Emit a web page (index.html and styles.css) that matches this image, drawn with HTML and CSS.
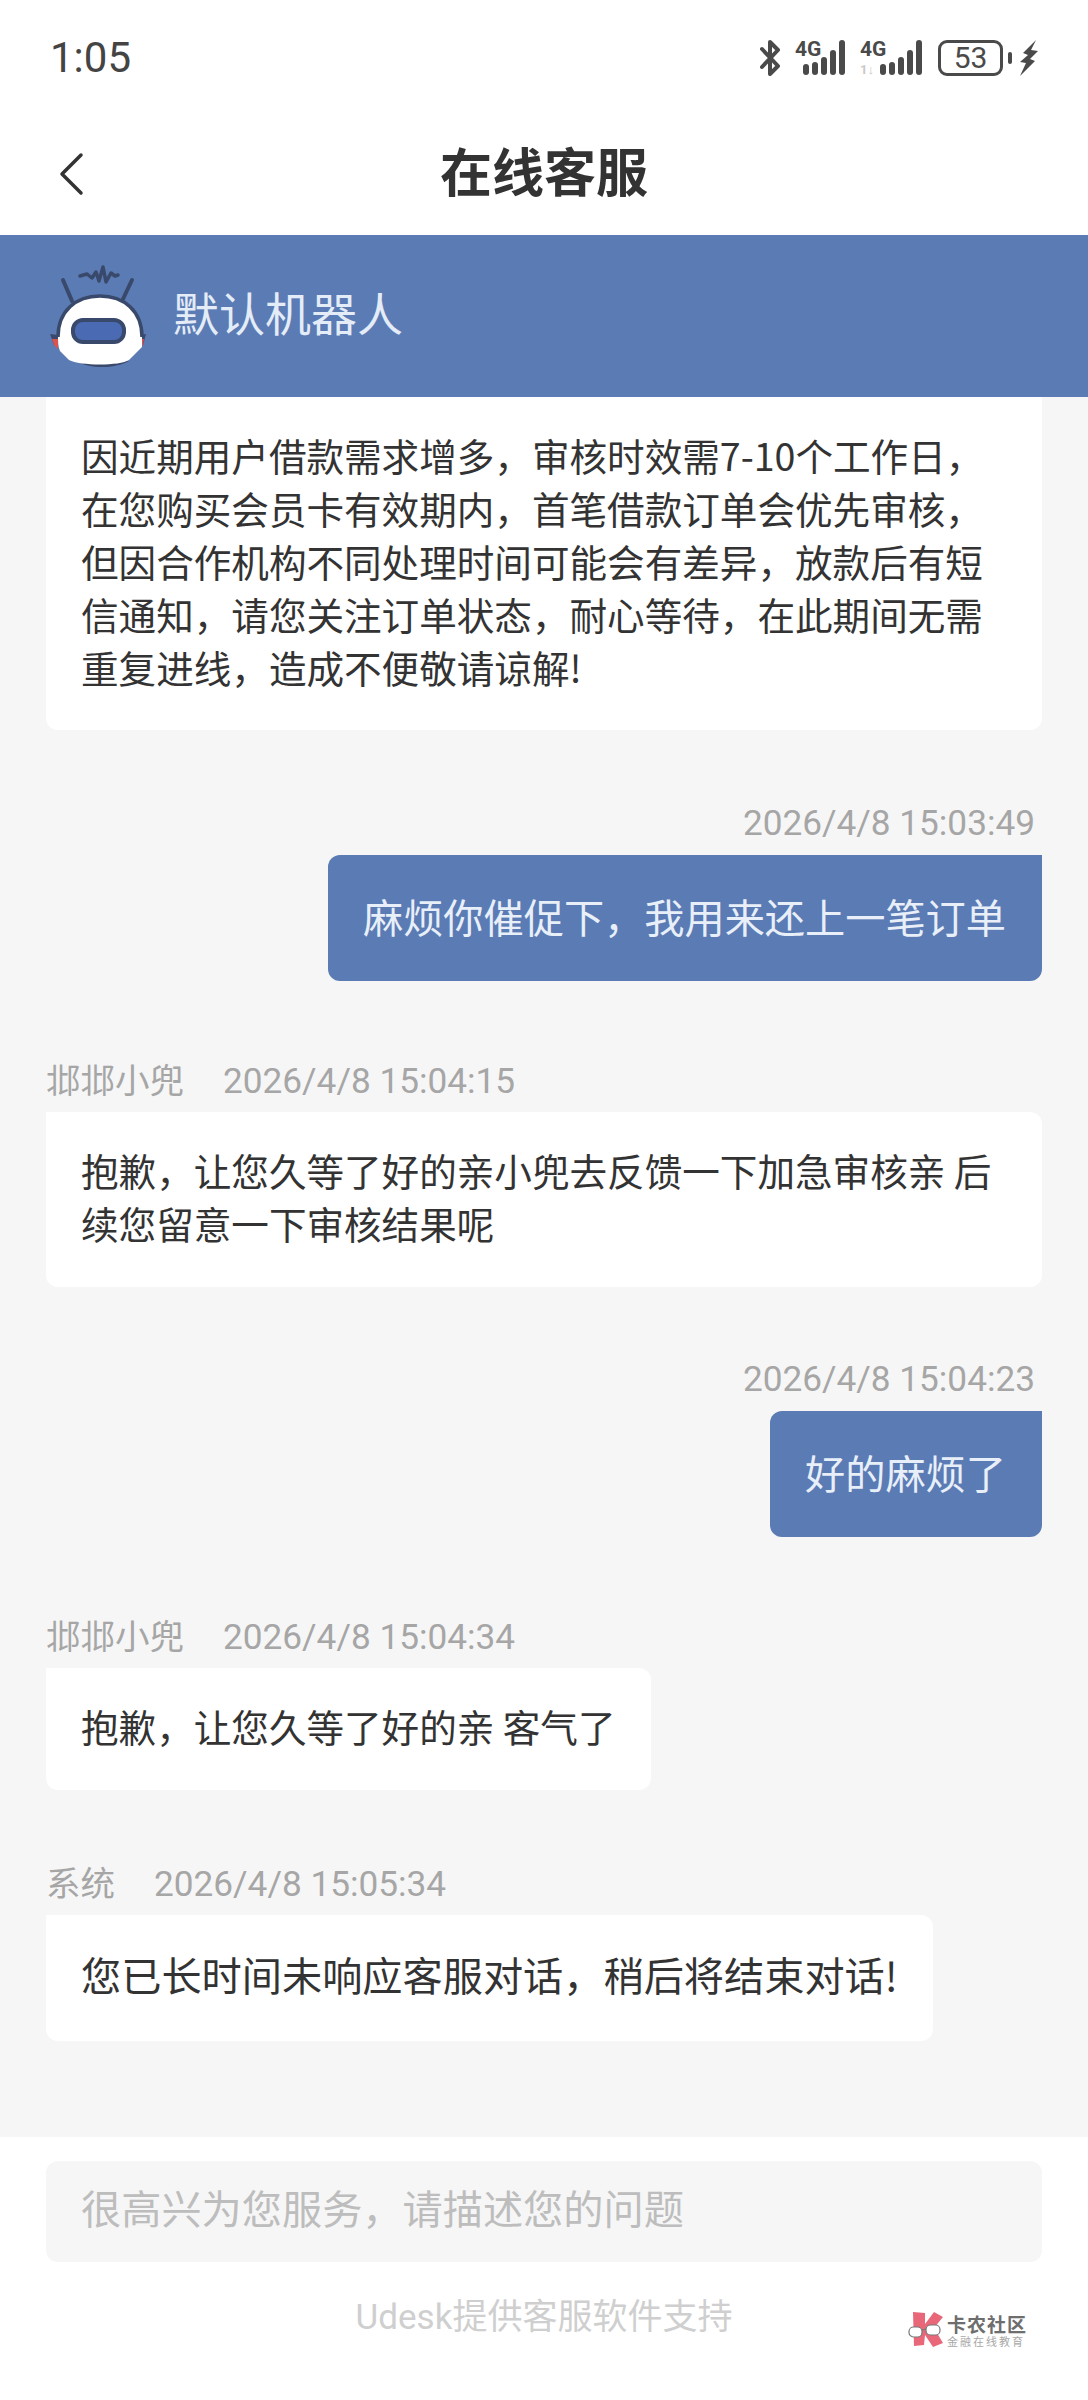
FILE: index.html
```html
<!DOCTYPE html>
<html lang="zh-CN">
<head>
    <meta charset="UTF-8">
    <meta name="viewport" content="width=device-width, initial-scale=1.0">
    <title>在线客服</title>
    <link rel="stylesheet" href="styles.css">
</head>
<body>
    <div class="page">
        <!-- status bar -->
        <div class="status-bar">
            <span class="clock">1:05</span>
            <div class="status-icons">
                <svg class="icon-bt" width="20" height="36" viewBox="0 0 20 36" fill="none" stroke="#4a4a4a" stroke-width="4" stroke-linejoin="round" stroke-linecap="round">
                    <path d="M2 9 18 26 10 34V2L18 10 2 27"/>
                </svg>
                <div class="signal">
                    <span class="net">4G</span>
                    <svg width="42" height="36" viewBox="0 0 42 36" fill="#4a4a4a">
                        <rect x="0" y="24" width="6" height="11" rx="3"/>
                        <rect x="9" y="22" width="6" height="13" rx="3"/>
                        <rect x="18" y="17" width="6" height="18" rx="3"/>
                        <rect x="27" y="10" width="6" height="25" rx="3"/>
                        <rect x="36" y="0" width="6" height="35" rx="3"/>
                    </svg>
                </div>
                <div class="signal signal-second">
                    <span class="net">4G</span>
                    <span class="sim">1↓</span>
                    <svg width="42" height="36" viewBox="0 0 42 36" fill="#4a4a4a">
                        <rect x="0" y="24" width="6" height="11" rx="3"/>
                        <rect x="9" y="22" width="6" height="13" rx="3"/>
                        <rect x="18" y="17" width="6" height="18" rx="3"/>
                        <rect x="27" y="10" width="6" height="25" rx="3"/>
                        <rect x="36" y="0" width="6" height="35" rx="3"/>
                    </svg>
                </div>
                <div class="battery">53</div>
                <span class="battery-cap"></span>
                <svg class="icon-bolt" width="18" height="36" viewBox="0 0 18 36" fill="#4a4a4a">
                    <path d="M16 0 3 13 8 15 0 22 6 23 0 36 15 21 10 19 18 11 11 10Z"/>
                </svg>
            </div>
        </div>

        <!-- title -->
        <div class="nav">
            <svg class="nav-back" width="26" height="44" viewBox="0 0 26 44" fill="none" stroke="#333" stroke-width="3.5" stroke-linecap="round" stroke-linejoin="round">
                <path d="M23 3 4 22 23 41"/>
            </svg>
            <h1 class="nav-title">在线客服</h1>
        </div>

        <!-- robot header -->
        <div class="agent-bar">
            <svg class="robot" width="130" height="150" viewBox="0 0 130 150">
                <path d="M42 60 33 39M93 58 102 39" stroke="#39496b" stroke-width="4" stroke-linecap="round"/>
                <path d="M50 35 57 33 62 37 66 31 69 40 73 26 76 41 81 32 85 35 88 34" fill="none" stroke="#39496b" stroke-width="3.5" stroke-linecap="round" stroke-linejoin="round"/>
                <path d="M20 93 28 94 28 106 24 104Z" fill="#3b4a6b"/>
                <path d="M116 93 110 94 110 106 113 104Z" fill="#3b4a6b"/>
                <path d="M22 98 28 98 28 108 24 104Z" fill="#d9534f"/>
                <path d="M114 98 110 98 110 108 113 104Z" fill="#d9534f"/>
                <path d="M46 120C60 128 84 128 99 120L92 118H53Z" fill="#39496b"/>
                <path d="M28 93C28 70 46 55 70 55 94 55 112 70 112 93V106L99 119C90 125 50 125 39 119L30 110C28 106 28 100 28 93Z" fill="#fff"/>
                <path d="M28 96C28 70 46 55 70 55 94 55 112 70 112 96" fill="none" stroke="#39496b" stroke-width="3.5"/>
                <rect x="43" y="79" width="51" height="22" rx="10" fill="#4a6bb3" stroke="#39496b" stroke-width="4"/>
            </svg>
            <span class="agent-name">默认机器人</span>
        </div>

        <!-- messages -->
        <div class="chat">
            <div class="bubble bubble-agent bubble-first">因近期用户借款需求增多，审核时效需7-10个工作日，<br>在您购买会员卡有效期内，首笔借款订单会优先审核，<br>但因合作机构不同处理时间可能会有差异，放款后有短<br>信通知，请您关注订单状态，耐心等待，在此期间无需<br>重复进线，造成不便敬请谅解!</div>

            <div class="msg msg-me msg-a">
                <div class="meta">2026/4/8 15:03:49</div>
                <div class="bubble bubble-me">麻烦你催促下，我用来还上一笔订单</div>
            </div>

            <div class="msg msg-b">
                <div class="meta"><span class="sender">邶邶小兜</span>2026/4/8 15:04:15</div>
                <div class="bubble bubble-agent">抱歉，让您久等了好的亲小兜去反馈一下加急审核亲 后续您留意一下审核结果呢</div>
            </div>

            <div class="msg msg-me msg-c">
                <div class="meta">2026/4/8 15:04:23</div>
                <div class="bubble bubble-me">好的麻烦了</div>
            </div>

            <div class="msg msg-d">
                <div class="meta"><span class="sender">邶邶小兜</span>2026/4/8 15:04:34</div>
                <div class="bubble bubble-agent">抱歉，让您久等了好的亲 客气了</div>
            </div>

            <div class="msg msg-e">
                <div class="meta"><span class="sender">系统</span>2026/4/8 15:05:34</div>
                <div class="bubble bubble-system">您已长时间未响应客服对话，稍后将结束对话!</div>
            </div>
        </div>

        <!-- input -->
        <div class="composer">
            <div class="composer-input">很高兴为您服务，请描述您的问题</div>
            <div class="powered">Udesk提供客服软件支持</div>
        </div>

        <!-- watermark -->
        <div class="watermark">
            <svg width="36" height="36" viewBox="0 0 36 36">
                <path d="M5 0 17 1V12L26 0 35 5 26 16 35 31 25 35 17 23 16 33 6 34Z" fill="#e8687a"/>
                <rect x="1" y="15" width="13" height="10" rx="4.5" fill="#fff" stroke="#777" stroke-width="1.2"/>
                <rect x="18" y="13" width="14" height="10" rx="4.5" fill="#fff" stroke="#777" stroke-width="1.2"/>
                <path d="M14 18 18 17" stroke="#777" stroke-width="1.2"/>
            </svg>
            <div class="watermark-text">
                <span class="watermark-name">卡农社区</span>
                <span class="watermark-sub">金融在线教育</span>
            </div>
        </div>
    </div>
</body>
</html>
```

FILE: styles.css
```css
* {
    box-sizing: border-box;
}
body {
    margin: 0;
    background-color: #fff;
    font-family: "Noto Sans CJK SC", "Noto Sans", sans-serif;
    color: #333;
}
.page {
    position: relative;
    width: 1088px;
    height: 2400px;
    overflow: hidden;
    display: flex;
    flex-direction: column;
}

/* status bar */
.status-bar {
    height: 115px;
    padding: 0 50px;
    display: flex;
    justify-content: space-between;
    align-items: center;
}
.clock {
    font-family: Roboto, sans-serif;
    font-size: 42px;
    color: #444;
}
.status-icons {
    display: flex;
    align-items: center;
}
.icon-bt {
    margin-right: 15px;
}
.signal {
    position: relative;
    width: 50px;
    height: 36px;
    display: flex;
    justify-content: flex-end;
    margin-right: 15px;
}
.signal svg {
    flex-shrink: 0;
}
.net {
    position: absolute;
    left: 0;
    top: -1px;
    font-family: Roboto, sans-serif;
    font-size: 21px;
    font-weight: 700;
    line-height: 21px;
    color: #4a4a4a;
}
.signal-second {
    width: 62px;
    margin-right: 16px;
}
.sim {
    position: absolute;
    left: 0;
    bottom: 0;
    font-family: Roboto, sans-serif;
    font-size: 13px;
    line-height: 13px;
    font-weight: 700;
    color: #c9c9c9;
}
.battery {
    width: 65px;
    height: 36px;
    border: 3px solid #4a4a4a;
    border-radius: 9px;
    font-family: Roboto, sans-serif;
    font-size: 30px;
    line-height: 30px;
    text-align: center;
    color: #4a4a4a;
}
.battery-cap {
    width: 4px;
    height: 12px;
    margin: 0 8px 0 5px;
    border-radius: 2px;
    background-color: #4a4a4a;
}

/* title */
.nav {
    height: 120px;
    padding-bottom: 12px;
    display: flex;
    align-items: center;
    justify-content: center;
    position: relative;
}
.nav-back {
    position: absolute;
    left: 58px;
    top: 37px;
}
.nav-title {
    margin: 0;
    font-size: 52px;
    font-weight: 700;
    color: #333;
}

/* robot header */
.agent-bar {
    height: 162px;
    padding-left: 30px;
    display: flex;
    align-items: center;
    background-color: #5b7bb4;
}
.robot {
    flex-shrink: 0;
}
.agent-name {
    margin-left: 13px;
    margin-bottom: 10px;
    font-size: 46px;
    color: #e3ecf7;
}

/* messages */
.chat {
    flex: 1;
    padding: 0 46px;
    display: flex;
    flex-direction: column;
    align-items: flex-start;
    background-color: #f6f6f6;
}
.msg {
    display: flex;
    flex-direction: column;
    align-items: flex-start;
    align-self: stretch;
}
.msg-me {
    align-items: flex-end;
}
.msg-a {
    margin-top: 67px;
}
.msg-b {
    margin-top: 73px;
}
.msg-c {
    margin-top: 66px;
}
.msg-d {
    margin-top: 73px;
}
.msg-e {
    margin-top: 67px;
}
.meta {
    height: 50px;
    margin-bottom: 8px;
    font-family: Roboto, "Noto Sans CJK SC", sans-serif;
    font-size: 35.2px;
    line-height: 48px;
    color: #a6a6a6;
}
.msg-me .meta {
    padding-top: 2px;
    padding-right: 7px;
}
.sender {
    margin-right: 39px;
    font-family: "Noto Sans CJK SC", sans-serif;
    font-size: 34.5px;
}
.bubble {
    border-radius: 12px;
    background-color: #fff;
}
.bubble-agent {
    padding: 31px 35px 38px;
    font-size: 37.6px;
    line-height: 53px;
    border-top-left-radius: 0;
}
.bubble-first {
    width: 100%;
    padding-bottom: 37px;
    border-top-right-radius: 0;
    white-space: nowrap;
}
.bubble-system {
    padding: 32px 35px 40px;
    font-size: 40.2px;
    line-height: 54px;
    border-top-left-radius: 0;
}
.bubble-me {
    padding: 33px 36px 38px 35px;
    font-size: 40.2px;
    line-height: 55px;
    color: #e8eff8;
    background-color: #5b7bb4;
    border-top-right-radius: 0;
}

/* input */
.composer {
    height: 263px;
    padding: 24px 46px 0;
    background-color: #fff;
}
.composer-input {
    height: 101px;
    padding-left: 35px;
    border-radius: 12px;
    font-size: 40.2px;
    line-height: 92px;
    color: #bdbdbd;
    background-color: #f6f6f6;
}
.powered {
    margin-top: 31px;
    font-family: Roboto, "Noto Sans CJK SC", sans-serif;
    font-size: 35px;
    line-height: 50px;
    text-align: center;
    color: #cfcfcf;
}

/* watermark */
.watermark {
    position: absolute;
    left: 908px;
    top: 2312px;
    display: flex;
    align-items: center;
    gap: 3px;
}
.watermark-text {
    display: flex;
    flex-direction: column;
}
.watermark-name {
    font-size: 19px;
    font-weight: 700;
    line-height: 23px;
    letter-spacing: 1px;
    color: #6e6e6e;
}
.watermark-sub {
    font-size: 11px;
    line-height: 13px;
    letter-spacing: 2px;
    color: #a8a8a8;
}
```
